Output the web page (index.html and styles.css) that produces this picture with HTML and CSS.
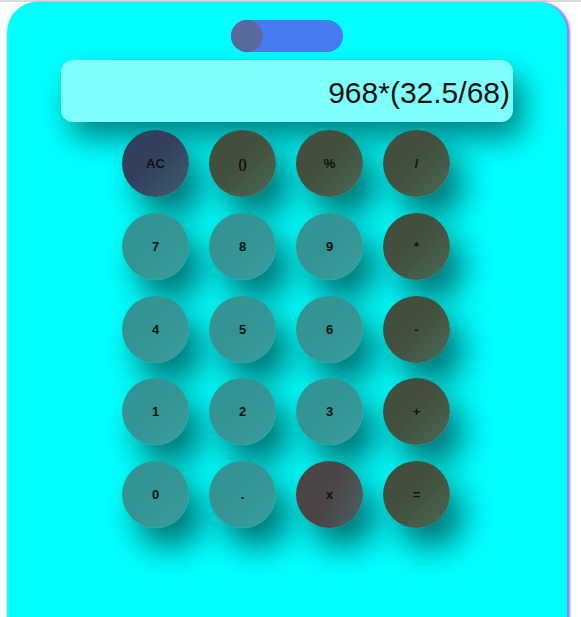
FILE: index.html
```html
<!DOCTYPE html>
<html>
<head>
<meta charset="utf-8">
<link rel="stylesheet" href="styles.css">
</head>
<body>
<div class="page">
  <div class="calc">
    <div class="toggle"><span class="knob"></span></div>
    <div class="display">968*(32.5/68)</div>
    <div class="keys">
      <button class="key clear">AC</button>
      <button class="key op">()</button>
      <button class="key op">%</button>
      <button class="key op">/</button>
      <button class="key num">7</button>
      <button class="key num">8</button>
      <button class="key num">9</button>
      <button class="key op">*</button>
      <button class="key num">4</button>
      <button class="key num">5</button>
      <button class="key num">6</button>
      <button class="key op">-</button>
      <button class="key num">1</button>
      <button class="key num">2</button>
      <button class="key num">3</button>
      <button class="key op">+</button>
      <button class="key num">0</button>
      <button class="key num">.</button>
      <button class="key del">x</button>
      <button class="key op">=</button>
    </div>
  </div>
</div>
</body>
</html>
```

FILE: styles.css
```css
html, body {
  margin: 0;
  padding: 0;
  background: #ffffff;
  overflow: hidden;
}

.page {
  border-top: 2px solid #dadada;
  height: 615px;
}

.calc {
  margin-left: 7px;
  width: 560px;
  height: 640px;
  background: #00ffff;
  border-radius: 30px 30px 0 0;
  box-shadow: 3px 0 2px rgba(100, 90, 255, 0.75);
  display: flex;
  flex-direction: column;
  align-items: center;
  padding-top: 18px;
  box-sizing: border-box;
}

.toggle {
  width: 112px;
  height: 32px;
  border-radius: 16px;
  background: #467cf2;
  display: flex;
  align-items: center;
}

.knob {
  width: 32px;
  height: 32px;
  border-radius: 50%;
  background: #5b6a9c;
}

.display {
  margin-top: 8px;
  width: 452px;
  height: 62px;
  box-sizing: border-box;
  border-radius: 12px;
  background: #80ffff;
  box-shadow: 10px 16px 30px rgba(0, 50, 50, 0.6);
  font-family: "Liberation Sans", Arial, sans-serif;
  font-size: 30px;
  color: #111;
  display: flex;
  align-items: center;
  justify-content: flex-end;
  padding: 3px 3px 0 0;
}

.keys {
  margin-top: 8px;
  display: grid;
  grid-template-columns: repeat(4, 67px);
  grid-auto-rows: 67px;
  column-gap: 20px;
  row-gap: 15.75px;
  margin-left: -2px;
}

.key {
  width: 67px;
  height: 67px;
  border: none;
  border-radius: 50%;
  padding: 0;
  font-family: "Liberation Sans", Arial, sans-serif;
  font-weight: bold;
  font-size: 13px;
  color: #111;
  box-shadow: 14px 20px 32px rgba(0, 40, 40, 0.65);
}

.num {
  background: linear-gradient(135deg, #349494 50%, #3a9d9d);
}

.op {
  background: linear-gradient(135deg, #424f3c 45%, #496a58);
}

.clear {
  background: linear-gradient(135deg, #33405c 45%, #3f5e70);
}

.del {
  background: linear-gradient(110deg, #4b4545 50%, #4b6262);
}
```
